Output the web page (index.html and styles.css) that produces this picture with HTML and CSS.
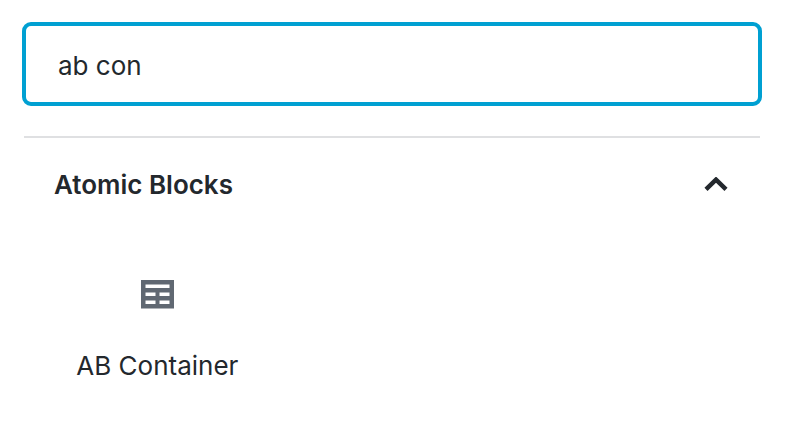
FILE: index.html
```
<!DOCTYPE html>
<html lang="en">
<head>
    <meta charset="UTF-8">
    <meta name="viewport" content="width=device-width, initial-scale=1.0">
    <title>Add Block</title>
    <link rel="stylesheet" href="styles.css">
</head>
<body>
    <div class="inserter">
        <input type="text" class="inserter-search" id="block-search" aria-label="Search for a block" value="ab con">
        <div class="inserter-results">
            <h2 class="panel-title">
                <button type="button" class="panel-toggle" aria-expanded="true">
                    Atomic Blocks
                    <svg class="panel-arrow" width="24" height="16" viewBox="0 0 24 16" aria-hidden="true">
                        <path d="M2 12.4 L12 2.6 L22 12.4" fill="none" stroke="currentColor" stroke-width="4.4"/>
                    </svg>
                </button>
            </h2>
            <div class="block-list">
                <button type="button" class="block-item">
                    <svg class="block-icon" width="33" height="29" viewBox="0 0 33 29" aria-hidden="true">
                        <path fill="currentColor" fill-rule="evenodd" d="M0 0h33v28.5H0z M4.5 4.5v3.5h24v-3.5z M4.5 12.5v3.5h10v-3.5z M18.5 12.5v3.5h10v-3.5z M4.5 20.5v3.5h10v-3.5z M18.5 20.5v3.5h10v-3.5z"/>
                    </svg>
                    <span class="block-name">AB Container</span>
                </button>
            </div>
        </div>
    </div>
</body>
</html>
```

FILE: styles.css
```
* {
    box-sizing: border-box;
}
body {
    margin: 0;
    background-color: #fff;
    color: #23282d;
    font-family: Inter, "Liberation Sans", sans-serif;
}
.inserter {
    padding: 22px 24px 24px 22px;
}
.inserter-search {
    display: block;
    width: 100%;
    height: 84px;
    padding: 2px 32px 0;
    border: 4px solid #00a0d2;
    border-radius: 9px;
    background-color: #fff;
    color: inherit;
    font-family: inherit;
    font-size: 26px;
    outline: none;
}
.inserter-results {
    margin: 30px 2px 0;
    border-top: 2px solid #dfe0e2;
}
.panel-title {
    margin: 0;
}
.panel-toggle {
    display: flex;
    justify-content: space-between;
    align-items: center;
    width: 100%;
    padding: 30px 32px 30px 30px;
    border: none;
    background: none;
    color: inherit;
    font-family: inherit;
    font-size: 26px;
    font-weight: 600;
    line-height: 34px;
    text-align: left;
    cursor: pointer;
}
.block-list {
    display: grid;
    grid-template-columns: repeat(3, 1fr);
    padding: 0 16px;
}
.block-item {
    display: flex;
    flex-direction: column;
    align-items: center;
    padding: 48px 8px 16px;
    border: none;
    background: none;
    color: inherit;
    font-family: inherit;
    font-size: 26px;
    line-height: 34px;
    cursor: pointer;
}
.block-icon {
    margin-bottom: 40px;
    color: #606872;
}
```
